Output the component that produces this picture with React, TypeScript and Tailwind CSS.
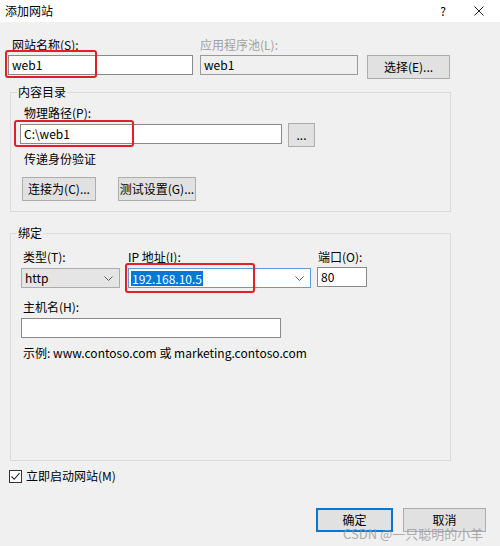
import React from "react";

const Chevron = () => (
  <svg width="9" height="5" viewBox="0 0 9 5" className="shrink-0">
    <path d="M0.5 0.5 L4.5 4.5 L8.5 0.5" fill="none" stroke="#606060" strokeWidth="1" />
  </svg>
);

export default function App() {
  const font = { fontFamily: '"Microsoft YaHei UI", "Noto Sans CJK SC", "Noto Sans", sans-serif' };
  return (
    <div
      className="relative w-[500px] h-[546px] bg-[#f0f0f0] overflow-hidden flex flex-col text-[12px] text-black"
      style={font}
    >
      {/* Title bar */}
      <div className="h-[22px] bg-white flex items-center pl-[5px] pr-[16px] shrink-0">
        <span className="leading-[16px]">添加网站</span>
        <span className="ml-auto text-[12px] leading-[16px] mr-[28px]">?</span>
        <svg width="10" height="10" viewBox="0 0 10 10">
          <path d="M0.5 0.5 L9.5 9.5 M9.5 0.5 L0.5 9.5" stroke="#222" strokeWidth="1" />
        </svg>
      </div>

      {/* Row 1 */}
      <div className="mt-[15px] pl-[8px] flex items-start">
        <div className="flex flex-col w-[185px]">
          <div className="pl-[4px] h-[16px] leading-[16px] mb-[2px]">网站名称(S):</div>
          <div className="h-[20px] bg-white border border-[#8a8a8a] flex items-center pl-[3px] leading-[16px]">web1</div>
        </div>
        <div className="flex flex-col w-[158px] ml-[7px]">
          <div className="h-[16px] leading-[16px] mb-[2px] text-[#a0a0a0]">应用程序池(L):</div>
          <div className="h-[20px] bg-[#f0f0f0] border border-[#9a9a9a] flex items-center pl-[3px] leading-[16px]">web1</div>
        </div>
        <button className="ml-[9px] mt-[18px] w-[83px] h-[24px] bg-[#e1e1e1] border border-[#adadad] flex items-center justify-center leading-[16px]">
          选择(E)...
        </button>
      </div>

      {/* Group 1 */}
      <fieldset className="mt-[5px] ml-[10px] w-[441px] border border-[#dcdcdc] p-0 m-0 shrink-0">
        <legend className="ml-[6px] px-[1px] h-[16px] leading-[16px]">内容目录</legend>
        <div className="pt-[5px] pb-[10px] flex flex-col">
          <div className="ml-[13px] h-[16px] leading-[16px] mb-[3px]">物理路径(P):</div>
          <div className="ml-[9px] flex items-start">
            <div className="w-[262px] h-[20px] bg-white border border-[#8a8a8a] flex items-center pl-[3px] leading-[16px]">C:\web1</div>
            <button className="ml-[6px] -mt-[1px] w-[27px] h-[24px] bg-[#e1e1e1] border border-[#adadad] flex items-center justify-center leading-[16px]">
              ...
            </button>
          </div>
          <div className="ml-[13px] mt-[4px] h-[16px] leading-[16px]">传递身份验证</div>
          <div className="ml-[11px] mt-[10px] flex">
            <button className="w-[74px] h-[24px] bg-[#e1e1e1] border border-[#adadad] flex items-center justify-center leading-[16px]">
              连接为(C)...
            </button>
            <button className="ml-[22px] w-[78px] h-[24px] bg-[#e1e1e1] border border-[#adadad] flex items-center justify-center leading-[16px]">
              测试设置(G)...
            </button>
          </div>
        </div>
      </fieldset>

      {/* Group 2 */}
      <fieldset className="mt-[13px] ml-[10px] w-[441px] h-[236px] border border-[#dcdcdc] p-0 m-0 shrink-0">
        <legend className="ml-[6px] px-[1px] h-[16px] leading-[16px]">绑定</legend>
        <div className="pt-[8px] flex flex-col">
          <div className="flex items-start">
            <div className="ml-[10px] w-[99px] flex flex-col">
              <div className="pl-[2px] h-[16px] leading-[16px] mb-[3px]">类型(T):</div>
              <div className="h-[20px] bg-[#e5e5e5] border border-[#acacac] flex items-center pl-[3px] pr-[6px] leading-[16px]">
                <span>http</span>
                <span className="ml-auto flex"><Chevron /></span>
              </div>
            </div>
            <div className="ml-[8px] w-[183px] flex flex-col">
              <div className="h-[16px] leading-[16px] mb-[3px]">IP 地址(I):</div>
              <div className="h-[20px] bg-white border border-[#5a9ee0] flex items-center pl-[2px] pr-[6px] leading-[16px]">
                <span className="bg-[#0078d7] text-white px-[1px] leading-[15px]">192.168.10.5</span>
                <span className="ml-auto flex"><Chevron /></span>
              </div>
            </div>
            <div className="ml-[6px] w-[50px] flex flex-col">
              <div className="pl-[1px] h-[16px] leading-[16px] mb-[2px]">端口(O):</div>
              <div className="h-[20px] bg-white border border-[#8a8a8a] flex items-center pl-[3px] leading-[16px]">80</div>
            </div>
          </div>
          <div className="ml-[12px] mt-[11px] h-[16px] leading-[16px] mb-[3px]">主机名(H):</div>
          <div className="ml-[10px] w-[260px] h-[20px] bg-white border border-[#8a8a8a]" />
          <div className="ml-[12px] mt-[7px] h-[16px] leading-[16px]">示例: www.contoso.com 或 marketing.contoso.com</div>
        </div>
      </fieldset>

      {/* Checkbox */}
      <div className="mt-[7px] ml-[9px] flex items-center h-[16px]">
        <div className="w-[13px] h-[13px] border border-[#333] bg-white flex items-center justify-center">
          <svg width="11" height="11" viewBox="0 0 11 11">
            <path d="M1.5 5.5 L4.2 8.3 L9.5 2.2" fill="none" stroke="#222" strokeWidth="1.1" />
          </svg>
        </div>
        <span className="ml-[4px] leading-[16px]">立即启动网站(M)</span>
      </div>

      {/* Bottom buttons */}
      <div className="mt-[24px] pr-[14px] flex justify-end">
        <button className="w-[77px] h-[24px] bg-[#e1e1e1] border-2 border-[#0078d7] flex items-center justify-center leading-[16px]">
          确定
        </button>
        <button className="ml-[10px] w-[83px] h-[24px] bg-[#e1e1e1] border border-[#adadad] flex items-center justify-center leading-[16px]">
          取消
        </button>
      </div>

      {/* Red highlight overlays */}
      <div className="absolute left-[5px] top-[50px] w-[92px] h-[28px] border-2 border-[#e3202a] rounded-[3px] pointer-events-none" />
      <div className="absolute left-[14px] top-[120px] w-[120px] h-[27px] border-2 border-[#e3202a] rounded-[3px] pointer-events-none" />
      <div className="absolute left-[125px] top-[263px] w-[130px] h-[30px] border-2 border-[#e3202a] rounded-[3px] pointer-events-none" />

      {/* Watermark */}
      <div className="absolute left-[343px] top-[525px] text-[13px] leading-[18px] text-[#9a9a9a] opacity-80 whitespace-nowrap pointer-events-none">
        CSDN @一只聪明的小羊
      </div>
    </div>
  );
}
